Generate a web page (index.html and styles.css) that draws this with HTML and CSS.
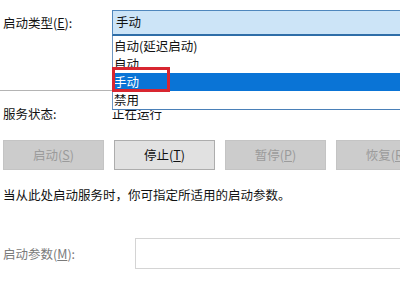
FILE: index.html
```html
<!DOCTYPE html>
<html lang="zh-CN">
<head>
<meta charset="utf-8">
<link rel="stylesheet" href="styles.css">
</head>
<body>
<div class="page">
  <div class="row type-row">
    <div class="label">启动类型(<u>E</u>):</div>
    <div class="combo">
      <div class="combo-head">手动</div>
      <ul class="combo-list">
        <li>自动(延迟启动)</li>
        <li>自动</li>
        <li class="selected">手动</li>
        <li>禁用</li>
      </ul>
      <div class="mark"></div>
    </div>
  </div>
  <div class="sep"></div>
  <div class="row status-row">
    <div class="label">服务状态:</div>
    <div class="value">正在运行</div>
  </div>
  <div class="buttons">
    <div class="btn disabled">启动(<u>S</u>)</div>
    <div class="btn">停止(<u>T</u>)</div>
    <div class="btn disabled">暂停(<u>P</u>)</div>
    <div class="btn disabled">恢复(<u>R</u>)</div>
  </div>
  <div class="desc">当从此处启动服务时，你可指定所适用的启动参数。</div>
  <div class="row param-row">
    <div class="label param-label">启动参数(<u>M</u>):</div>
    <div class="input"></div>
  </div>
</div>
</body>
</html>
```

FILE: styles.css
```css
html, body {
  margin: 0;
  padding: 0;
  background: #ffffff;
}
body {
  width: 400px;
  height: 300px;
  overflow: hidden;
  font-family: "Noto Sans CJK SC", "Noto Sans", sans-serif;
  font-size: 12.5px;
  color: #111111;
}
.page {
  padding-top: 10px;
  position: relative;
}
.row {
  display: flex;
  align-items: center;
}
.label {
  width: 109px;
  padding-left: 3px;
  flex: none;
  line-height: 16px;
}
u {
  text-decoration-thickness: 1px;
  text-underline-offset: 1px;
}
.type-row {
  height: 26px;
  position: relative;
  z-index: 2;
}
.combo {
  position: relative;
  width: 300px;
  height: 26px;
  flex: none;
}
.combo-head {
  box-sizing: border-box;
  height: 26px;
  background: #cce4f7;
  border-top: 1px solid #4f87bd;
  border-left: 1px solid #4f87bd;
  border-bottom: 2px solid #2f6ea8;
  padding-left: 3px;
  line-height: 22px;
}
.combo-list {
  position: absolute;
  left: 0;
  top: 26px;
  width: 300px;
  margin: 0;
  padding: 1px 0 0 0;
  list-style: none;
  background: #ffffff;
  border-left: 1px solid #6f97c2;
  border-bottom: 1px solid #4a80b8;
  box-sizing: border-box;
  height: 74px;
}
.combo-list li {
  height: 18px;
  line-height: 18px;
  padding-left: 1px;
}
.combo-list li.selected {
  background: #0a74d6;
  color: #ffffff;
}
.mark {
  position: absolute;
  left: 0;
  top: 57px;
  width: 52px;
  height: 19px;
  border: 3px solid #d82630;
}
.sep {
  margin-top: 54px;
  height: 1px;
  background: #b4b4b4;
  width: 400px;
}
.status-row {
  margin-top: 15px;
  height: 16px;
}
.value {
  line-height: 16px;
}
.buttons {
  margin-top: 18px;
  padding-left: 3px;
  display: flex;
  gap: 10px;
}
.btn {
  box-sizing: border-box;
  flex: none;
  width: 101px;
  height: 30px;
  line-height: 28px;
  text-align: center;
  background: #e1e1e1;
  border: 1px solid #adadad;
  color: #111111;
}
.btn.disabled {
  background: #cccccc;
  border-color: #c4c4c4;
  color: #9b9b9b;
}
.desc {
  margin-top: 17px;
  padding-left: 3px;
  line-height: 16px;
}
.param-row {
  margin-top: 35px;
  height: 31px;
}
.param-label {
  width: 132px;
  color: #7a7a7a;
}
.input {
  box-sizing: border-box;
  width: 300px;
  height: 31px;
  border: 1px solid #d4d4d4;
  background: #ffffff;
  flex: none;
}
```
